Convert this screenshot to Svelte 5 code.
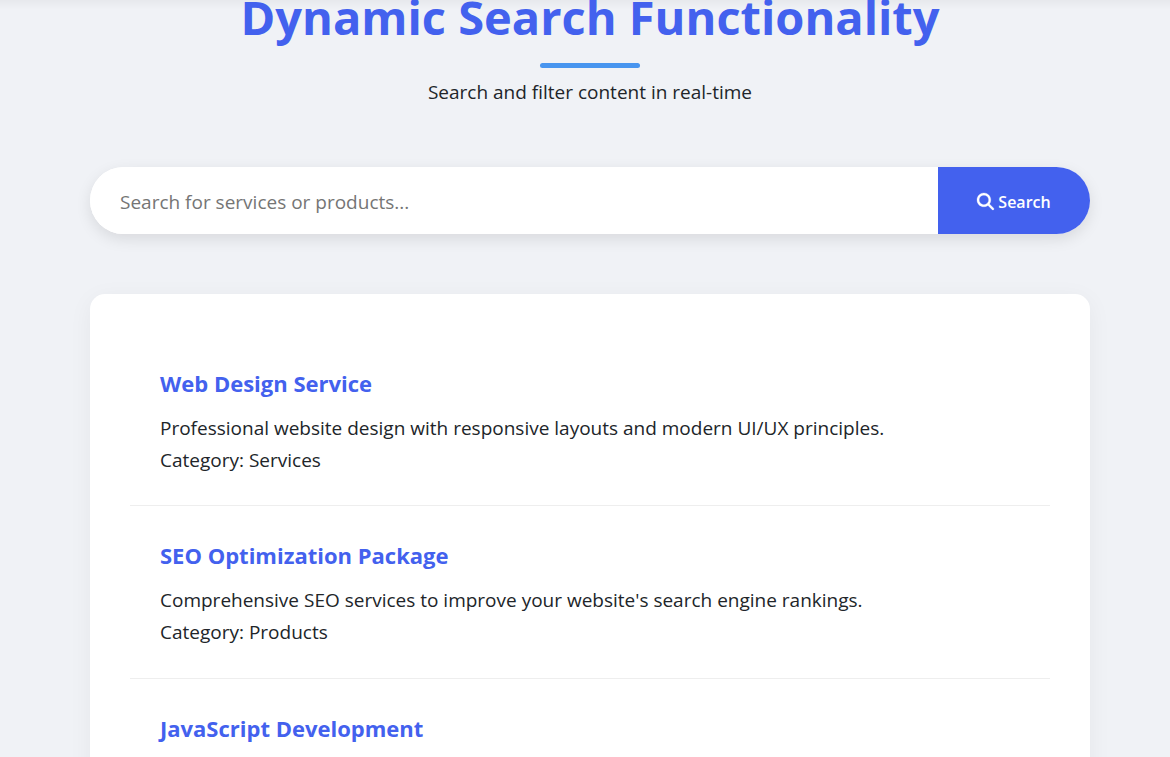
<script>
  let query = $state('');
  const items = [
    { title: 'Web Design Service', text: 'Professional website design with responsive layouts and modern UI/UX principles.', category: 'Services' },
    { title: 'SEO Optimization Package', text: "Comprehensive SEO services to improve your website's search engine rankings.", category: 'Products' },
    { title: 'JavaScript Development', text: '', category: '' }
  ];
  const shown = $derived(items.filter((i) => (i.title + ' ' + i.text + ' ' + i.category).toLowerCase().includes(query.trim().toLowerCase())));
</script>

<main class="page">
  <header>
    <h1>Dynamic Search Functionality</h1>
    <p>Search and filter content in real-time</p>
  </header>
  <form class="search" onsubmit={(e) => e.preventDefault()}>
    <input type="text" aria-label="Search for services or products" placeholder="Search for services or products..." bind:value={query} />
    <button type="submit">
      <svg viewBox="0 0 512 512" aria-hidden="true"><path fill="currentColor" stroke="currentColor" stroke-width="8" d="M416 208c0 45.900-14.900 88.300-40 122.700L502.600 457.400c12.500 12.500 12.500 32.800 0 45.300s-32.800 12.500-45.300 0L330.700 376c-34.400 25.200-76.800 40-122.700 40C93.100 416 0 322.900 0 208S93.100 0 208 0S416 93.100 416 208zM208 352a144 144 0 1 0 0-288 144 144 0 1 0 0 288z"/></svg>
      Search
    </button>
  </form>
  <section class="results">
    {#each shown as item}
      <article>
        <h2>{item.title}</h2>
        {#if item.text}
          <p>{item.text}</p>
          <p>Category: {item.category}</p>
        {/if}
      </article>
    {/each}
  </section>
</main>

<style>
  :global(html) { overflow: hidden; }
  :global(body) { margin: 0; background: #f0f2f6 linear-gradient(rgba(0, 0, 0, 0.04), rgba(0, 0, 0, 0)) 0 0 / 100% 10px no-repeat; color: #212529; font-family: "Open Sans", sans-serif; }
  :global(#app) { display: flow-root; }
  .page { max-width: 1000px; margin: 0 auto; padding: 0 80px 0 90px; }
  header { text-align: center; margin-top: -16px; }
  h1 { margin: 0; padding-bottom: 14px; font-size: 47px; line-height: 66px; font-weight: 700; color: #4361ee; }
  h1::after { content: ''; display: block; width: 100px; height: 5px; margin: 13px auto 0; border-radius: 3px; background: #4895ef; }
  header p { margin: -6px 0 0; font-size: 19px; line-height: 32px; }
  .search { display: flex; height: 67px; margin: 59px 0 60px; border-radius: 50px; overflow: hidden; background: #fff; box-shadow: 0 5px 15px rgba(0, 0, 0, 0.1); }
  input { flex: 1; min-width: 0; border: 0; outline: 0; padding: 2px 30px 0; font: 19px "Open Sans", sans-serif; color: #212529; }
  input::placeholder { color: #757575; opacity: 1; }
  button { display: flex; align-items: center; justify-content: center; gap: 4px; width: 152px; border: 0; padding: 2px 0 0; background: #4361ee; color: #fff; font: 600 16px "Open Sans", sans-serif; }
  svg { width: 17px; height: 17px; overflow: visible; }
  .results { padding: 40px; border-radius: 15px; background: #fff; box-shadow: 0 5px 25px rgba(0, 0, 0, 0.05); }
  article { padding: 30px; border-bottom: 1px solid #eee; }
  article:first-child { padding-bottom: 29px; }
  h2 { margin: 0 0 10px; font-size: 22px; line-height: 38px; font-weight: 700; color: #4361ee; }
  article p { margin: 0; font-size: 19px; line-height: 32px; }
</style>
